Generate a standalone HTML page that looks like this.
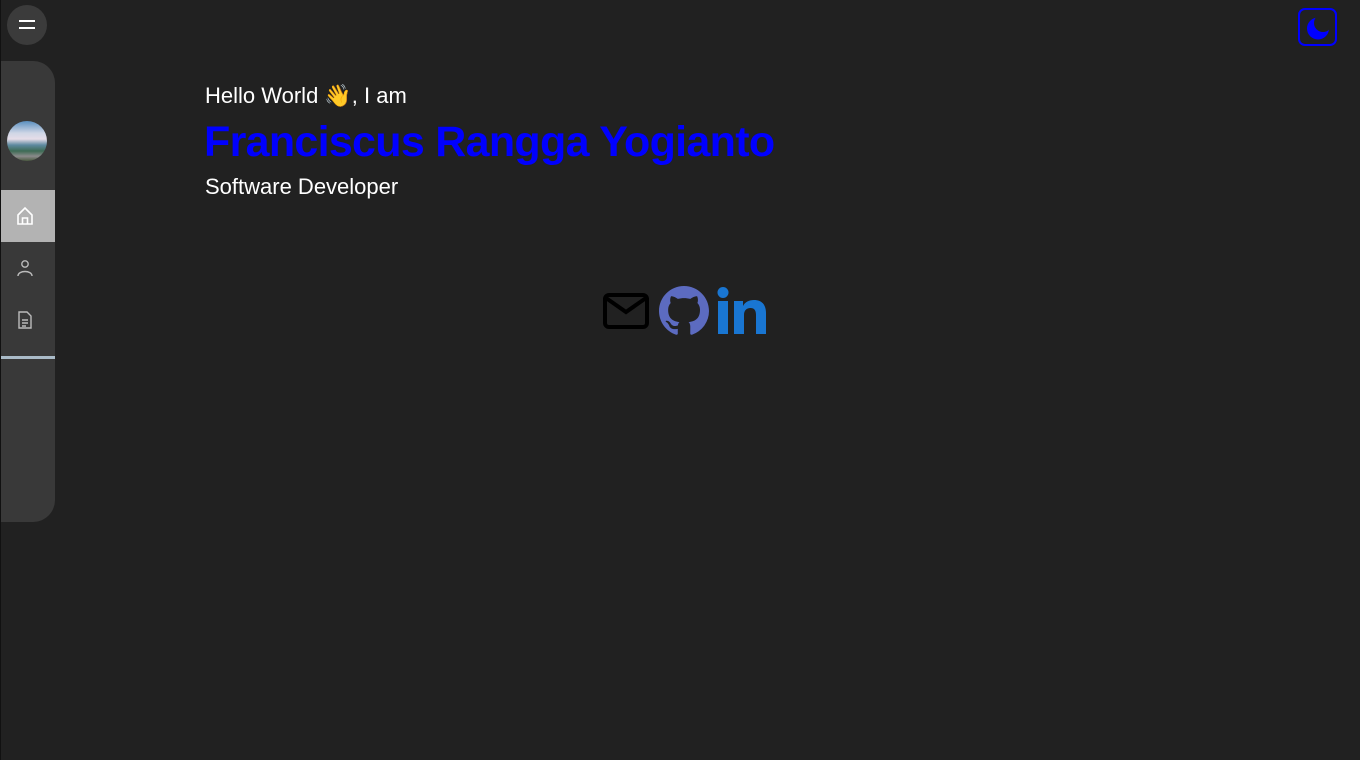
<!DOCTYPE html>
<html><head><meta charset="utf-8"><style>
*{margin:0;padding:0;box-sizing:border-box}
body{width:1360px;height:760px;background:#212121;font-family:"Liberation Sans","Noto Sans CJK JP",sans-serif;position:relative;overflow:hidden}
.edge{position:absolute;left:0;top:0;width:1px;height:760px;background:#111}
.menu{position:absolute;left:7px;top:5px;width:40px;height:40px;border-radius:50%;background:#3b3b3b}
.menu i{position:absolute;left:12px;width:16px;height:2px;background:#fff}
.side{position:absolute;left:1px;top:61px;width:54px;height:461px;background:#393939;border-radius:0 22px 22px 0}
.av{position:absolute;left:6px;top:60px;width:40px;height:40px;border-radius:50%;background:linear-gradient(180deg,#5a8fbf 0%,#cfd6e6 30%,#e6dde8 45%,#5e8aa0 60%,#3e6b55 75%,#8a8a8a 88%,#4a5a40 100%)}
.act{position:absolute;left:0;top:129px;width:54px;height:52px;background:#b3b3b3}
.bar{position:absolute;left:0;top:295px;width:54px;height:3px;background:#aabbc8}
.ic{position:absolute;left:15px}
.t1{position:absolute;left:205px;top:83px;color:#fff;font-size:22px}
.t2{position:absolute;left:204px;top:118px;color:#0000ff;font-size:43px;font-weight:bold;letter-spacing:-0.7px}
.t3{position:absolute;left:205px;top:174px;color:#fff;font-size:22px}
.moon{position:absolute;left:1298px;top:8px;width:39px;height:38px;border:2px solid #0000ff;border-radius:7px}
</style></head><body>
<div class="edge"></div>
<div class="menu"><i style="top:15px"></i><i style="top:22px"></i></div>
<div class="side">
<div class="av"></div>
<div class="act"></div>
<svg class="ic" style="top:145px" width="18" height="20" viewBox="0 0 18 20" fill="none" stroke="#fff" stroke-width="1.6"><path d="M2 9 L9 2 L16 9 V18 H2 Z"/><path d="M6.5 18 V12 H11.5 V18"/></svg>
<svg class="ic" style="top:198px" width="18" height="20" viewBox="0 0 18 20" fill="none" stroke="#bbb" stroke-width="1.4"><circle cx="9" cy="5" r="3.2"/><path d="M2 17 C2 11 16 11 16 17"/></svg>
<svg class="ic" style="top:249px" width="18" height="20" viewBox="0 0 18 20" fill="none" stroke="#bbb" stroke-width="1.4"><path d="M3 2 H11 L15 6 V18 H3 Z"/><path d="M6 10 H12 M6 13 H12 M6 16 H10"/></svg>
<div class="bar"></div>
</div>
<div class="t1">Hello World 👋, I am</div>
<div class="t2">Franciscus Rangga Yogianto</div>
<div class="t3">Software Developer</div>
<svg style="position:absolute;left:603px;top:293px" width="46" height="36" viewBox="0 0 46 36" fill="none" stroke="#000" stroke-width="4"><rect x="2" y="2" width="42" height="32" rx="4"/><path d="M3 5 L23 19 L43 5"/></svg>
<svg style="position:absolute;left:659px;top:286px" width="50" height="50" viewBox="0 0 16 16"><path fill="#5c6bc0" d="M8 0C3.58 0 0 3.580 0 8c0 3.54 2.29 6.53 5.47 7.59.4.07.55-.17.55-.38 0-.19-.01-.82-.01-1.49-2.01.37-2.53-.49-2.690-.94-.09-.23-.48-.94-.82-1.13-.28-.15-.68-.52-.01-.53.63-.01 1.08.58 1.23.82.72 1.21 1.870.87 2.33.66.07-.52.28-.87.51-1.07-1.78-.2-3.64-.89-3.64-3.95 0-.87.31-1.59.82-2.15-.08-.2-.36-1.02.08-2.12 0 0 .67-.21 2.2.82.64-.18 1.32-.27 2-.27.68 0 1.36.09 2 .27 1.53-1.04 2.2-.82 2.2-.82.44 1.1.16 1.92.08 2.12.51.56.82 1.27.82 2.15 0 3.07-1.870 3.75-3.65 3.95.29.25.54.73.54 1.48 0 1.07-.01 1.93-.01 2.2 0 .21.15.46.55.38A8.013 8.013 0 0016 8c0-4.42-3.58-8-8-8z"/></svg>
<svg style="position:absolute;left:717px;top:286px" width="50" height="50" viewBox="0 0 50 50" fill="#1976d2"><circle cx="6" cy="6.5" r="5.5"/><rect x="1" y="15" width="10" height="33"/><path d="M17 15 H26 V20 C28 16 32 14 37 14 C45 14 49 19 49 27 V48 H39 V29 C39 24 37 22 33.5 22 C29.5 22 27 24.5 27 29 V48 H17 Z"/></svg>
<div class="moon"><svg style="position:absolute;left:4px;top:4px" width="28" height="28" viewBox="0 0 28 28"><defs><mask id="m"><rect width="28" height="28" fill="#fff"/><circle cx="19" cy="9" r="9" fill="#000"/></mask></defs><circle cx="14" cy="14.5" r="11" fill="#0000ff" mask="url(#m)"/></svg></div>
</body></html>
